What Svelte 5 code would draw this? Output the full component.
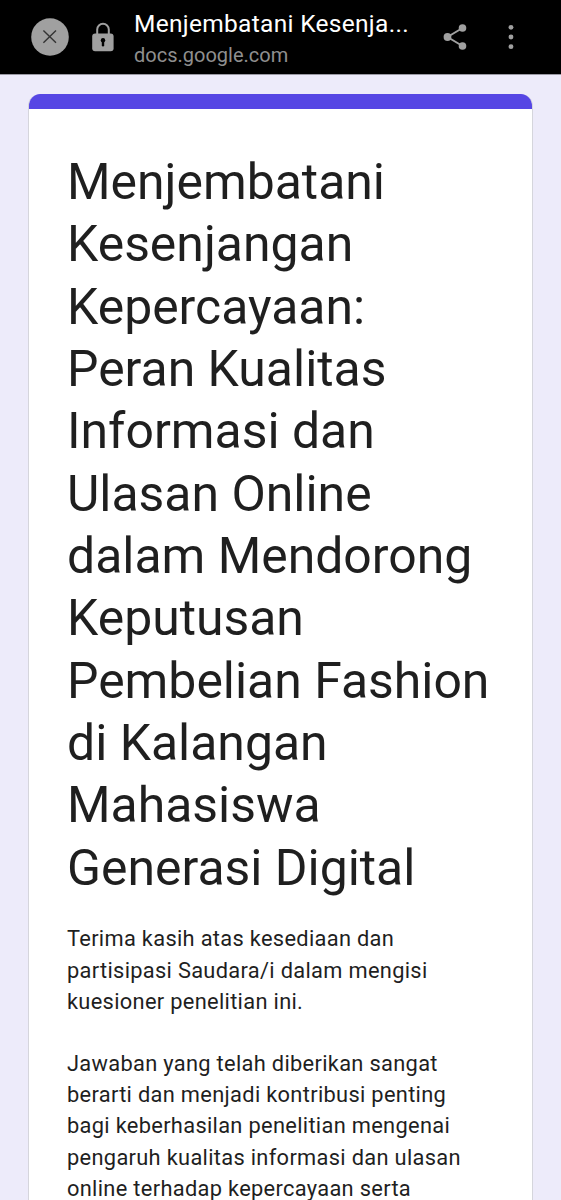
<script lang="ts">
	const host = 'docs.google.com';
	const pageTitle = 'Menjembatani Kesenja...';

	const titleLines = [
		'Menjembatani',
		'Kesenjangan',
		'Kepercayaan:',
		'Peran Kualitas',
		'Informasi dan',
		'Ulasan Online',
		'dalam Mendorong',
		'Keputusan',
		'Pembelian Fashion',
		'di Kalangan',
		'Mahasiswa',
		'Generasi Digital'
	];

	const paragraphs = [
		['Terima kasih atas kesediaan dan', 'partisipasi Saudara/i dalam mengisi', 'kuesioner penelitian ini.'],
		[
			'Jawaban yang telah diberikan sangat',
			'berarti dan menjadi kontribusi penting',
			'bagi keberhasilan penelitian mengenai',
			'pengaruh kualitas informasi dan ulasan',
			'online terhadap kepercayaan serta'
		]
	];
</script>

<div class="screen">
	<header class="toolbar">
		<button class="close" aria-label="Tutup">
			<svg width="38" height="38" viewBox="0 0 38 38">
				<circle cx="19" cy="19" r="18.8" fill="#a0a0a0" />
				<path d="M12.4 12.4l12.6 12.4M25 12.4L12.4 24.8" stroke="#333" stroke-width="1.4" />
			</svg>
		</button>
		<svg class="lock" width="22" height="30" viewBox="0 0 22 30">
			<path d="M5.2 13V7.6a5.8 5.8 0 0 1 11.6 0V13" fill="none" stroke="#a0a0a0" stroke-width="2" />
			<rect x="0.2" y="11.6" width="21.4" height="17.6" rx="3" fill="#a0a0a0" />
			<circle cx="11" cy="18.2" r="2.2" fill="#000" />
			<path d="M11 18v5.2" stroke="#000" stroke-width="2.4" stroke-linecap="round" />
		</svg>
		<div class="site">
			<span class="site-title">{pageTitle}</span>
			<span class="site-host">{host}</span>
		</div>
		<button class="share" aria-label="Bagikan">
			<svg width="24" height="26" viewBox="0 0 24 26">
				<path d="M19.5 4l-15 9 15 9" fill="none" stroke="#a0a0a0" stroke-width="1.9" />
				<circle cx="19.5" cy="4" r="3.8" fill="#a0a0a0" />
				<circle cx="4.5" cy="13" r="3.9" fill="#a0a0a0" />
				<circle cx="19.5" cy="22" r="3.8" fill="#a0a0a0" />
			</svg>
		</button>
		<button class="more" aria-label="Lainnya">
			<svg width="6" height="26" viewBox="0 0 6 26">
				<circle cx="3" cy="3.3" r="2.4" fill="#a0a0a0" />
				<circle cx="3" cy="13" r="2.4" fill="#a0a0a0" />
				<circle cx="3" cy="22.7" r="2.4" fill="#a0a0a0" />
			</svg>
		</button>
	</header>

	<main>
		<article class="card">
			<div class="accent"></div>
			<div class="content">
				<h1>
					{#each titleLines as line}
						<span>{line}</span>
					{/each}
				</h1>
				{#each paragraphs as lines}
					<p>
						{#each lines as line}
							<span>{line}</span>
						{/each}
					</p>
				{/each}
			</div>
		</article>
	</main>
</div>

<style>
	:global(body) {
		margin: 0;
		background: #edebfa;
	}

	.screen {
		height: 1200px;
		overflow: hidden;
		display: flex;
		flex-direction: column;
		background: #edebfa;
		font-family: Roboto, sans-serif;
	}

	.toolbar {
		box-sizing: border-box;
		flex: none;
		display: flex;
		align-items: center;
		height: 75px;
		padding: 0 47px 0 31px;
		background: #000;
		border-bottom: 1px solid #9a99a3;
	}

	.toolbar svg {
		display: block;
	}

	button {
		padding: 0;
		border: 0;
		background: none;
	}

	.lock {
		margin-left: 23px;
	}

	.site {
		display: flex;
		flex-direction: column;
		flex: 1;
		margin-left: 20px;
		padding-top: 3px;
		white-space: nowrap;
	}

	.site-title {
		font-size: 24.5px;
		line-height: 32px;
		letter-spacing: 0.3px;
		color: #fff;
	}

	.site-host {
		font-size: 20px;
		line-height: 30px;
		color: #8f8f8f;
	}

	.more {
		margin-left: 41px;
	}

	main {
		flex: 1;
		min-height: 0;
		padding: 18.6px 28px 0;
	}

	.card {
		box-sizing: border-box;
		height: 1200px;
		border-radius: 12px;
		overflow: hidden;
		background: #fff;
		border: 1px solid #d5d5dc;
		border-top: 0;
	}

	.accent {
		height: 15px;
		margin: 0 -1px;
		background: #5646e4;
	}

	.content {
		padding: 42.2px 38px 0;
		white-space: nowrap;
		color: #1f1f1f;
	}

	h1 {
		margin: 0 0 24.4px;
		font-size: 49.9px;
		line-height: 62.36px;
		font-weight: 400;
	}

	h1 span,
	p span {
		display: block;
	}

	p {
		margin: 0 0 31.2px;
		font-size: 21.84px;
		line-height: 31.15px;
		letter-spacing: 0.31px;
	}
</style>
